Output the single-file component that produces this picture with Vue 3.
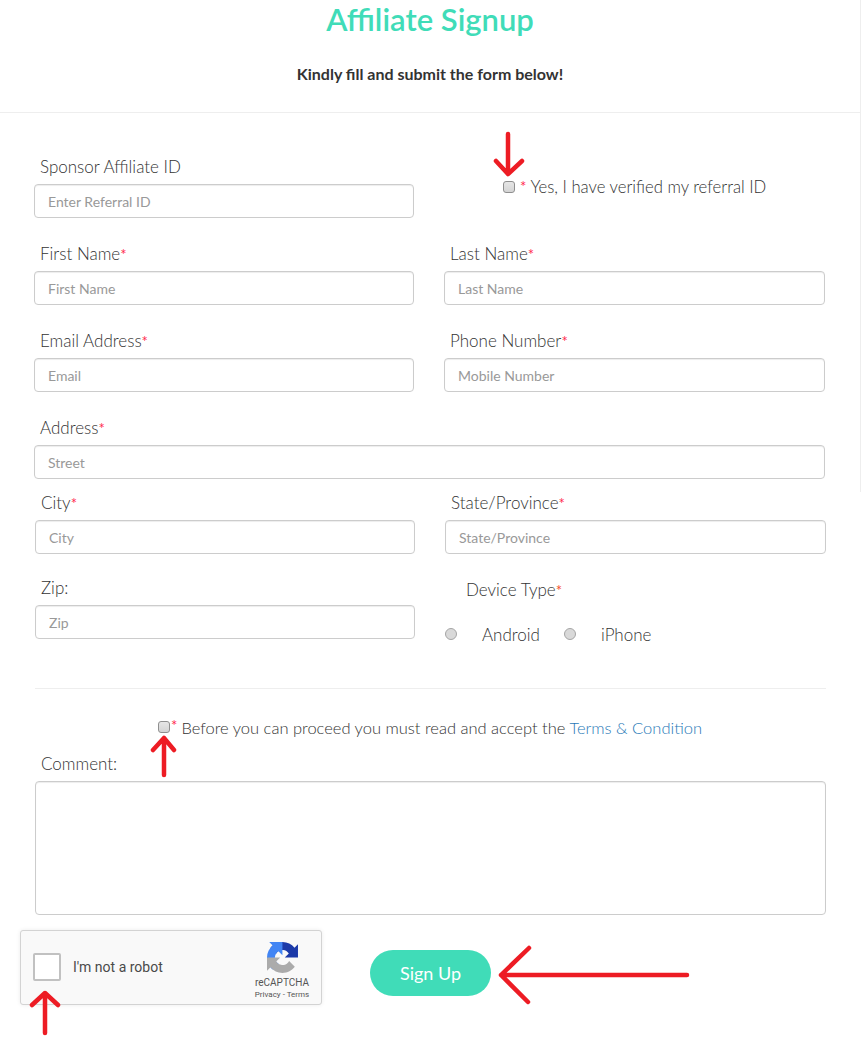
<script setup>
const rows = [
  [{ label: 'First Name', req: true, ph: 'First Name' }, { label: 'Last Name', req: true, ph: 'Last Name' }],
  [{ label: 'Email Address', req: true, ph: 'Email' }, { label: 'Phone Number', req: true, ph: 'Mobile Number' }]
]
const arrows = [
  { id: 'a1', d: 'M508 134V174M496 161L508 174L522 161' },
  { id: 'a2', d: 'M164 775V738M153 750L164 738L174 750' },
  { id: 'a3', d: 'M45 1033V993M32 1005L45 993L58 1005' },
  { id: 'a4', d: 'M687 975H501M529 948L501 975L528 1002' }
]
</script>

<template>
  <div class="page">
    <header class="head">
      <h1 class="title">Affiliate Signup</h1>
      <p class="sub">Kindly fill and submit the form below!</p>
    </header>
    <span class="edge"></span>

    <form class="form" @submit.prevent>
      <div class="row first">
        <div class="field">
          <label class="lab">Sponsor Affiliate ID</label>
          <input class="inp" placeholder="Enter Referral ID" />
        </div>
        <div class="verify">
          <span class="check"></span>
          <span class="star gap">*</span>
          <span class="txt vtxt">Yes, I have verified my referral ID</span>
        </div>
      </div>

      <div v-for="(r, i) in rows" :key="i" class="row">
        <div v-for="f in r" :key="f.label" class="field">
          <label class="lab">{{ f.label }}<span class="star">*</span></label>
          <input class="inp" :placeholder="f.ph" />
        </div>
      </div>

      <div class="field address">
        <label class="lab">Address<span class="star">*</span></label>
        <input class="inp" placeholder="Street" />
      </div>

      <div class="shifted">
        <div class="row tight">
          <div class="field">
            <label class="lab">City<span class="star">*</span></label>
            <input class="inp" placeholder="City" />
          </div>
          <div class="field">
            <label class="lab">State/Province<span class="star">*</span></label>
            <input class="inp" placeholder="State/Province" />
          </div>
        </div>

        <div class="row tight">
          <div class="field">
            <label class="lab">Zip:</label>
            <input class="inp" placeholder="Zip" />
          </div>
          <div class="device">
            <div class="lab devlab">Device Type<span class="star orange">*</span></div>
            <div class="radios">
              <span class="radio"></span><span class="rtxt">Android</span>
              <span class="radio r2"></span><span class="rtxt rtxt2">iPhone</span>
            </div>
          </div>
        </div>

        <hr class="rule" />

        <div class="terms">
          <span class="check"></span>
          <span class="star">*</span>
          <span class="txt ttxt">Before you can proceed you must read and accept the <a class="link">Terms &amp; Condition</a></span>
        </div>

        <label class="lab comment">Comment:</label>
        <textarea class="area"></textarea>
      </div>

      <div class="bottom">
        <div class="captcha">
          <span class="cbox"></span>
          <span class="robot">I'm not a robot</span>
          <div class="brand">
            <svg class="logo" width="31" height="31" viewBox="0 0 64 64">
              <path d="M64 31.955l-.033-1.37V4.687l-7.16 7.16C50.948 4.674 42.033.093 32.05.093c-10.4 0-19.622 4.96-25.458 12.64l11.736 11.86a15.55 15.55 0 0 1 4.754-5.334c2.05-1.6 4.952-2.906 8.968-2.906.485 0 .86.057 1.135.163 4.976.393 9.288 3.14 11.828 7.124l-8.307 8.307 26.2.008" fill="#1c3aa9" />
              <path d="M31.862 0l-1.37.033H4.594l7.16 7.16C4.58 13.05 0 21.967 0 31.95c0 10.4 4.96 19.622 12.64 25.458l11.86-11.736a15.55 15.55 0 0 1-5.334-4.754c-1.6-2.05-2.906-4.952-2.906-8.968 0-.485.057-.86.163-1.135.393-4.976 3.14-9.288 7.124-11.828l8.307 8.307L31.862 0" fill="#4285f4" />
              <path d="M.001 32l.033 1.37v25.898l7.16-7.16c5.86 7.173 14.774 11.754 24.76 11.754 10.4 0 19.622-4.96 25.458-12.64l-11.736-11.86a15.55 15.55 0 0 1-4.754 5.334c-2.05 1.6-4.952 2.906-8.968 2.906-.485 0-.86-.057-1.135-.163-4.976-.393-9.288-3.14-11.828-7.124l8.307-8.307-26.2-.008" fill="#ababab" />
            </svg>
            <div class="rc">reCAPTCHA</div>
            <div class="pt">Privacy - Terms</div>
          </div>
        </div>
        <button class="btn" type="button">Sign Up</button>
      </div>
    </form>

    <svg class="arrows" width="861" height="1037" viewBox="0 0 861 1037">
      <path v-for="a in arrows" :key="a.id" :d="a.d" fill="none" stroke="#ed1c24" stroke-width="4.500" stroke-linecap="round" stroke-linejoin="round" />
    </svg>
  </div>
</template>

<style>
html, body { margin: 0; background: #fff; }
</style>

<style scoped>
.page {
  position: relative;
  width: 861px;
  height: 1037px;
  overflow: hidden;
  background: #fff;
  font-family: Lato, "Liberation Sans", sans-serif;
  color: #333;
}
.head {
  width: 860px;
  height: 112px;
  border-bottom: 1px solid #eee;
  text-align: center;
}
.edge {
  position: absolute;
  left: 860px;
  top: 0;
  width: 1px;
  height: 492px;
  background: #eee;
}
.title {
  margin: 0;
  font-size: 31px;
  line-height: 38px;
  font-weight: 600;
  color: #40dcb8;
}
.sub {
  margin: 26px 0 0;
  font-size: 16px;
  line-height: 20px;
  font-weight: 700;
  color: #333;
}
.form { padding: 0 36px 0 34px; }
.row { display: grid; grid-template-columns: 380px 381px; gap: 30px; }
.first { padding-top: 42px; }
.row:not(.first):not(.tight) { margin-top: 24px; }
.field { min-width: 0; display: flex; flex-direction: column; }
.lab {
  display: block;
  margin: 0 0 6px 6px;
  font-size: 17px;
  line-height: 23px;
  font-weight: 300;
  color: #333;
}
.star { color: #ff2a4d; font-size: 15px; line-height: 1; font-weight: 400; }
.orange { color: #f5502a; }
.inp {
  box-sizing: border-box;
  width: 100%;
  height: 34px;
  padding: 0 12px 0 13px;
  border: 1px solid #ccc;
  border-radius: 4px;
  font-family: inherit;
  font-size: 14px;
  font-weight: 400;
  color: #555;
  background: #fff;
  box-shadow: inset 0 1px 1px rgba(0, 0, 0, .075);
  outline: none;
}
.inp::placeholder { color: #999; opacity: 1; }
.verify {
  display: flex;
  align-items: center;
  height: 23px;
  margin-top: 20px;
  padding-left: 59px;
}
.check {
  box-sizing: border-box;
  flex: none;
  width: 12px;
  height: 12px;
  border: 1px solid #8f8f8f;
  border-radius: 3px;
  background: linear-gradient(#e6e6e6, #d4d4d4);
}
.gap { margin: 0 4px 0 5px; }
.txt { font-weight: 300; color: #333; white-space: nowrap; }
.vtxt { font-size: 16.700px; }
.ttxt { font-size: 16.500px; }
.address { margin-top: 24px; }
.shifted { margin: 0 -1px 0 1px; }
.tight { margin-top: 12px; }
.tight + .tight { margin-top: 22px; }
.device { min-width: 0; }
.devlab { margin: 0 0 0 21px; padding-top: 2px; }
.radios {
  display: flex;
  align-items: center;
  margin: 21px 0 0;
  height: 23px;
  font-size: 17px;
  font-weight: 300;
}
.radio {
  box-sizing: border-box;
  flex: none;
  width: 12px;
  height: 12px;
  border: 1px solid #a5a5a5;
  border-radius: 50%;
  background: #d9d9d9;
}
.r2 { margin-left: 24px; }
.rtxt { margin: 2px 0 0 25px; color: #333; }
.rule { margin: 43px 0 0; border: 0; border-top: 1px solid #eee; }
.terms {
  display: flex;
  align-items: center;
  height: 23px;
  margin-top: 27px;
  padding-left: 123px;
}
.terms .check { margin-top: -2px; }
.terms .star { margin: 2px 4px 0 1px; line-height: 14px; align-self: flex-start; }
.link { color: #2a7ab8; }
.comment { margin: 13px 0 6px 6px; }
.area {
  display: block;
  box-sizing: border-box;
  width: 100%;
  height: 134px;
  padding: 6px 12px;
  border: 1px solid #ccc;
  border-radius: 4px;
  background: #fff;
  box-shadow: inset 0 1px 1px rgba(0, 0, 0, .075);
  resize: none;
  outline: none;
}
.bottom {
  display: flex;
  align-items: flex-start;
  margin: 15px 0 0 -14px;
}
.captcha {
  box-sizing: border-box;
  flex: none;
  display: flex;
  align-items: center;
  width: 302px;
  height: 75px;
  padding: 0 0 2px 12px;
  border: 1px solid #d3d3d3;
  border-radius: 3px;
  background: #f9f9f9;
  box-shadow: 0 0 4px rgba(0, 0, 0, .08);
  font-family: Roboto, "Liberation Sans", sans-serif;
}
.cbox {
  box-sizing: border-box;
  flex: none;
  width: 28px;
  height: 28px;
  border: 2px solid #c1c1c1;
  border-radius: 2px;
  background: #fff;
}
.robot { margin-left: 12px; font-size: 14px; color: #4a4a4a; }
.brand {
  margin-left: auto;
  width: 56px;
  margin-right: 11px;
  display: flex;
  flex-direction: column;
  align-items: center;
  padding-top: 9px;
}
.logo { display: block; }
.rc { margin-top: 4px; font-size: 10px; line-height: 12px; color: #555; }
.pt { margin-top: 1px; font-size: 8px; line-height: 10px; color: #555; white-space: nowrap; }
.btn {
  flex: none;
  width: 121px;
  height: 46px;
  margin: 20px 0 0 48px;
  border: 0;
  border-radius: 23px;
  background: #40dcb8;
  color: #fff;
  font-family: inherit;
  font-size: 18px;
  font-weight: 400;
}
.arrows { position: absolute; left: 0; top: 0; pointer-events: none; }
</style>
